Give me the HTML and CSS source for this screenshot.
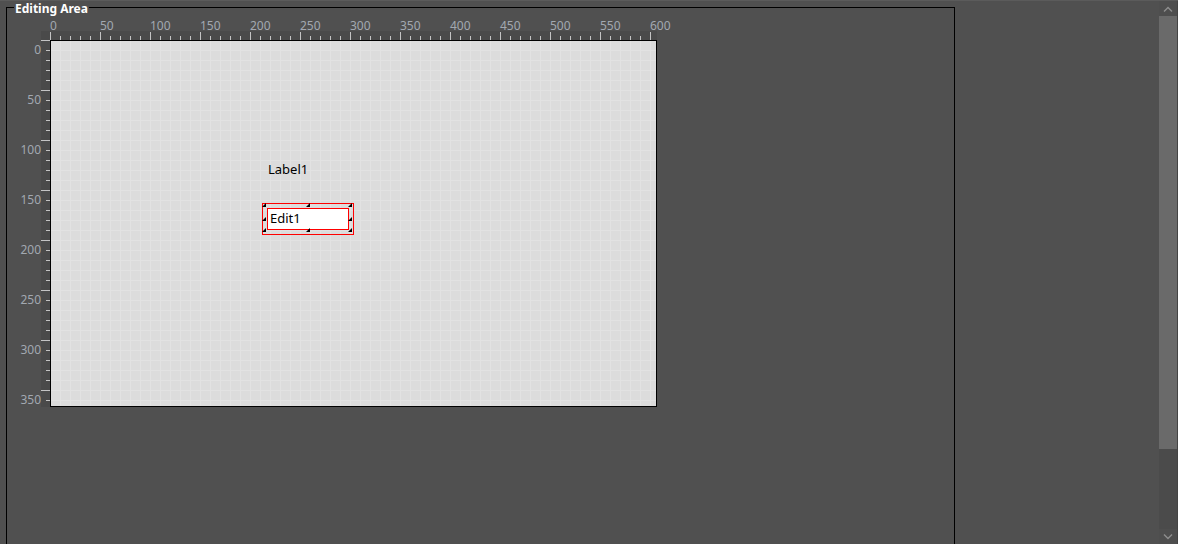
FILE: index.html
```html
<!DOCTYPE html>
<html>
<head>
  <title>Editing Area</title>
  <link rel="stylesheet" href="styles.css">
</head>
<body>
  <div class="app">
    <div class="editor">
      <div class="panel">
        <div class="panel-title">Editing Area</div>
        <div class="stage">
          <div class="hlabels">
            <span>0</span><span>50</span><span>100</span><span>150</span><span>200</span>
            <span>250</span><span>300</span><span>350</span><span>400</span><span>450</span>
            <span>500</span><span>550</span><span>600</span>
          </div>
          <div class="vlabels">
            <span>0</span><span>50</span><span>100</span><span>150</span>
            <span>200</span><span>250</span><span>300</span><span>350</span>
          </div>
          <div class="corner"></div>
          <div class="hruler"></div>
          <div class="vruler"></div>
          <div class="form-canvas">
            <div class="comp-label">Label1</div>
            <div class="selection">
              <div class="comp-edit">Edit1</div>
              <i class="handle h-tl"></i>
              <i class="handle h-tm"></i>
              <i class="handle h-tr"></i>
              <i class="handle h-ml"></i>
              <i class="handle h-mr"></i>
              <i class="handle h-bl"></i>
              <i class="handle h-bm"></i>
              <i class="handle h-br"></i>
            </div>
          </div>
        </div>
      </div>
    </div>

    <div class="scrollbar">
      <div class="scroll-arrow">
        <svg width="10" height="6" viewBox="0 0 10 6"><polyline points="1,5.5 5,1.5 9,5.5" fill="none" stroke="#8e8e8e" stroke-width="1.4"/></svg>
      </div>
      <div class="scroll-thumb"></div>
      <div class="scroll-track"></div>
      <div class="scroll-arrow">
        <svg width="10" height="6" viewBox="0 0 10 6"><polyline points="1,0.5 5,4.5 9,0.5" fill="none" stroke="#8e8e8e" stroke-width="1.4"/></svg>
      </div>
    </div>
    <div class="edge"></div>
  </div>
</body>
</html>
```

FILE: styles.css
```css
body {
  margin: 0;
  padding: 0;
  background-color: #505050;
  font-family: "Noto Sans", Arial, sans-serif;
  border-top: 1px solid #5b5b5b;
  height: 543px;
  overflow: hidden;
}
.app {
  display: flex;
  height: 543px;
}
.editor {
  flex: 1;
  overflow: hidden;
}
.panel {
  margin: 6px 0 0 6px;
  width: 949px;
  height: 600px;
  box-sizing: border-box;
  border: 1px solid #000;
}
.panel-title {
  margin: -7px 0 0 7px;
  padding: 0 1px;
  width: fit-content;
  background-color: #505050;
  color: #fff;
  font-size: 12px;
  font-weight: bold;
  line-height: 15px;
}

/* rulers + form */
.stage {
  display: grid;
  grid-template-columns: 34px 9px 607px;
  grid-template-rows: 15px 9px 367px;
  color: #a2a8b0;
  font-size: 12px;
}
.hlabels {
  grid-column: 3;
  grid-row: 1;
  display: flex;
  padding-top: 4px;
  line-height: 12px;
}
.hlabels span {
  flex: none;
  width: 50px;
}
.vlabels {
  grid-column: 1;
  grid-row: 1 / 4;
  display: flex;
  flex-direction: column;
  padding-top: 9px;
  line-height: 12px;
}
.vlabels span {
  flex: none;
  height: 50px;
  display: flex;
  align-items: center;
  justify-content: flex-end;
}
.corner {
  grid-column: 2;
  grid-row: 2;
  background-color: #4a4a4a;
}
.hruler {
  grid-column: 3;
  grid-row: 2;
  background:
    linear-gradient(to right, #c4c4c4 1px, transparent 1px) 0 100% / 50px 8px repeat-x,
    linear-gradient(to right, #c4c4c4 1px, transparent 1px) 0 100% / 10px 4px repeat-x,
    #4a4a4a;
}
.vruler {
  grid-column: 2;
  grid-row: 3;
  background:
    linear-gradient(#c4c4c4 1px, transparent 1px) 0 0 / 100% 50px repeat-y,
    linear-gradient(#c4c4c4 1px, transparent 1px) 100% 0 / 4px 10px repeat-y,
    #4a4a4a;
}
.form-canvas {
  grid-column: 3;
  grid-row: 3;
  position: relative;
  box-sizing: border-box;
  border: 1px solid #000;
  background:
    linear-gradient(to right, #e2e2e2 1px, transparent 1px) 9px 0 / 10px 100%,
    linear-gradient(#e2e2e2 1px, transparent 1px) 0 9px / 100% 10px,
    #dcdcdc;
  color: #000;
  font-size: 13px;
}
.comp-label {
  position: absolute;
  left: 217px;
  top: 121px;
  line-height: 15px;
}
.selection {
  position: absolute;
  left: 211px;
  top: 162px;
  width: 92px;
  height: 32px;
  box-sizing: border-box;
  border: 1px solid #ff0000;
  padding: 4px;
}
.comp-edit {
  height: 22px;
  box-sizing: border-box;
  border: 1px solid #ff0000;
  background-color: #fff;
  padding-left: 2px;
  line-height: 19px;
}
.handle {
  position: absolute;
  width: 4px;
  height: 4px;
  background-color: #000;
  clip-path: polygon(100% 0, 100% 100%, 0 100%);
}
.h-tl { left: -1px; top: -1px; }
.h-tm { left: 43px; top: -1px; }
.h-tr { left: 85px; top: -1px; }
.h-ml { left: -1px; top: 13px; }
.h-mr { left: 85px; top: 13px; }
.h-bl { left: -1px; top: 24px; }
.h-bm { left: 43px; top: 24px; }
.h-br { left: 85px; top: 24px; }

/* scrollbar */
.scrollbar {
  width: 18px;
  display: flex;
  flex-direction: column;
  background-color: #4b4b4b;
}
.scroll-arrow {
  height: 15px;
  display: flex;
  align-items: center;
  justify-content: center;
  background-color: #4e4e4e;
}
.scroll-thumb {
  height: 433px;
  background-color: #6a6a6a;
}
.scroll-track {
  flex: 1;
}
.edge {
  width: 1px;
  background-color: #444;
}
```
